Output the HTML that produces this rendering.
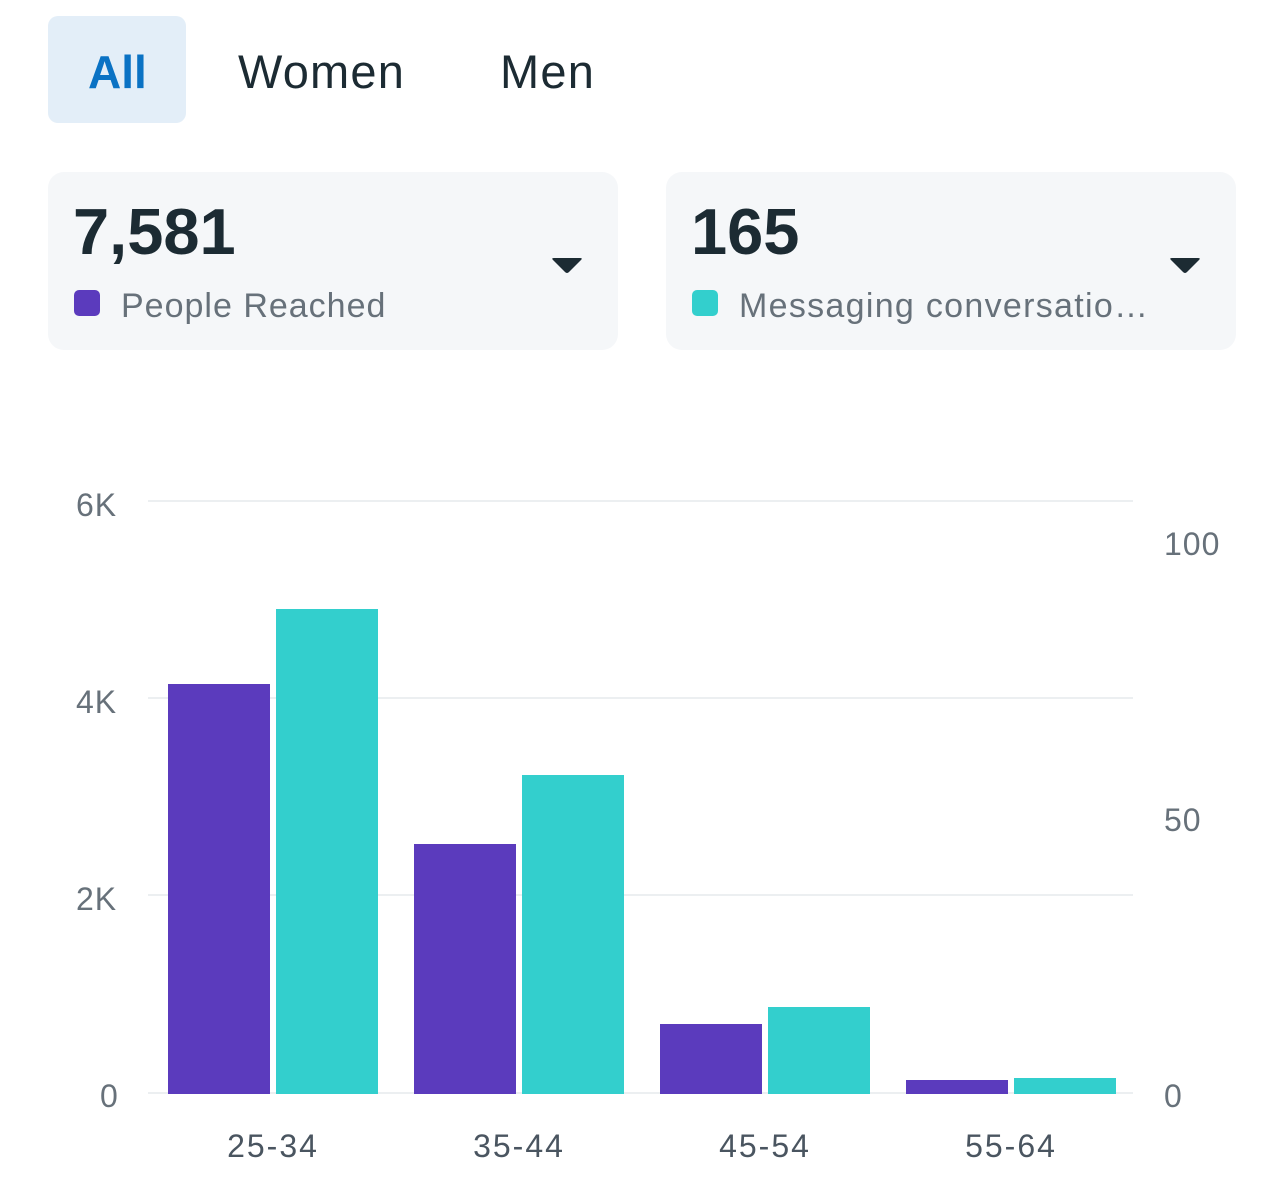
<!DOCTYPE html>
<html><head><meta charset="utf-8"><style>
body{margin:0;width:1284px;height:1197px;background:#fff;position:relative;font-family:"Liberation Sans",sans-serif;overflow:hidden}
.a{position:absolute}
.tab{font-size:47px;color:#1c2b33;top:44px;line-height:56px;letter-spacing:1.2px}
.card{position:absolute;top:172px;height:178px;width:570px;background:#f5f7f9;border-radius:16px}
.num{position:absolute;left:25px;top:22px;font-size:65px;font-weight:bold;color:#1c2b33;line-height:76px}
.lab{position:absolute;left:73px;top:114px;font-size:34px;color:#67717a;line-height:40px;white-space:nowrap;letter-spacing:1px}
.sw{position:absolute;left:26px;top:118px;width:26px;height:26px;border-radius:5px}
.car{position:absolute;left:503px;top:84px}
.grid{position:absolute;left:148px;width:985px;height:2px;background:#eceff1}
.yl{position:absolute;font-size:32px;color:#67717a;line-height:36px;letter-spacing:1px}
.bar{position:absolute;width:102px}
.p{background:#5b3bbd}.t{background:#33cfcd}
.xl{position:absolute;top:1128px;font-size:32px;color:#4a5560;width:120px;text-align:center;letter-spacing:2px}
</style></head><body>
<div class="a" style="left:48px;top:16px;width:138px;height:107px;background:#e3eef8;border-radius:10px"></div>
<div class="a tab" style="left:88px;color:#0a72c4;font-weight:bold;font-size:46px;letter-spacing:0">All</div>
<div class="a tab" style="left:238px">Women</div>
<div class="a tab" style="left:500px">Men</div>

<div class="card" style="left:48px">
<div class="num">7,581</div>
<div class="sw" style="background:#5b3bbd"></div>
<div class="lab">People Reached</div>
<svg class="car" width="32" height="22" viewBox="0 0 32 22"><path d="M2 4 Q0 2 3 2 H29 Q32 2 30 4 L18 16 Q16 18 14 16 Z" fill="#1c2b33"/></svg>
</div>
<div class="card" style="left:666px">
<div class="num">165</div>
<div class="sw" style="background:#33cfcd"></div>
<div class="lab" style="letter-spacing:1.3px">Messaging conversatio…</div>
<svg class="car" width="32" height="22" viewBox="0 0 32 22"><path d="M2 4 Q0 2 3 2 H29 Q32 2 30 4 L18 16 Q16 18 14 16 Z" fill="#1c2b33"/></svg>
</div>

<div class="grid" style="top:500px"></div>
<div class="grid" style="top:697px"></div>
<div class="grid" style="top:894px"></div>
<div class="grid" style="top:1092px"></div>
<div class="yl" style="left:76px;top:487px">6K</div>
<div class="yl" style="left:76px;top:684px">4K</div>
<div class="yl" style="left:76px;top:881px">2K</div>
<div class="yl" style="left:100px;top:1078px">0</div>
<div class="yl" style="left:1164px;top:526px">100</div>
<div class="yl" style="left:1164px;top:802px">50</div>
<div class="yl" style="left:1164px;top:1078px">0</div>

<div class="bar p" style="left:168px;top:684px;height:410px"></div>
<div class="bar t" style="left:276px;top:609px;height:485px"></div>
<div class="bar p" style="left:414px;top:844px;height:250px"></div>
<div class="bar t" style="left:522px;top:775px;height:319px"></div>
<div class="bar p" style="left:660px;top:1024px;height:70px"></div>
<div class="bar t" style="left:768px;top:1007px;height:87px"></div>
<div class="bar p" style="left:906px;top:1080px;height:14px"></div>
<div class="bar t" style="left:1014px;top:1078px;height:16px"></div>

<div class="xl" style="left:213px">25-34</div>
<div class="xl" style="left:459px">35-44</div>
<div class="xl" style="left:705px">45-54</div>
<div class="xl" style="left:951px">55-64</div>
</body></html>
